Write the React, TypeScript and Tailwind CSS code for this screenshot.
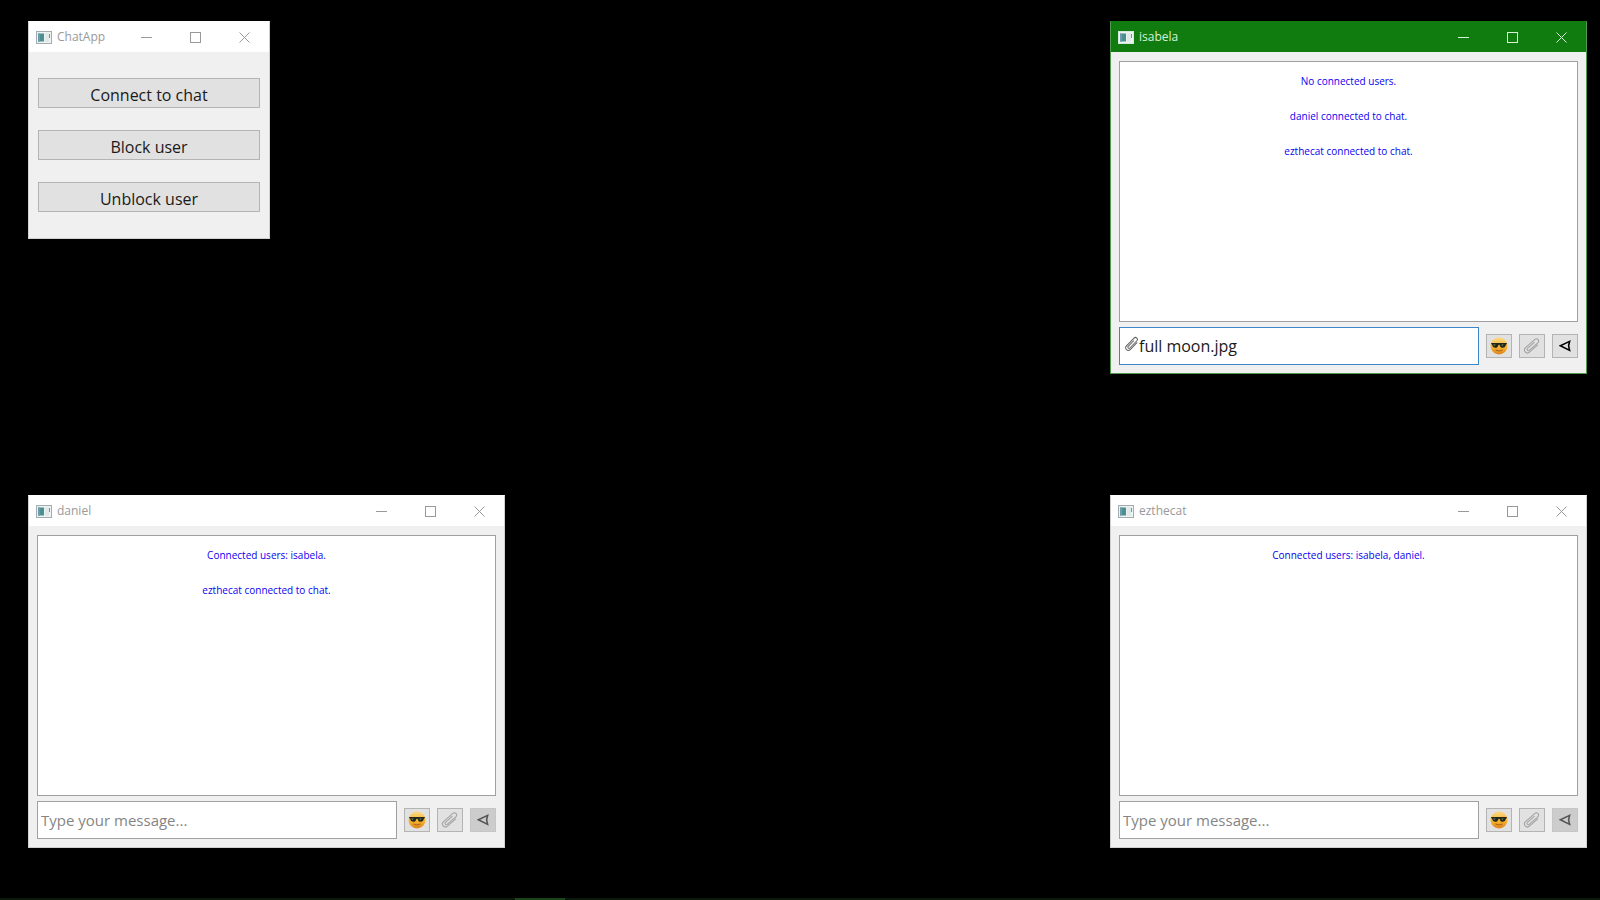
import { useState } from "react";

function AppIcon({ active }: { active?: boolean }) {
  return (
    <svg width="16" height="13" viewBox="0 0 16 13" aria-hidden="true" className="shrink-0">
      <rect x="0.5" y="0.5" width="15" height="12" fill="#eef3f2" stroke={active ? "#d5e6dc" : "#a3acb0"} />
      <rect x="2" y="2.5" width="6" height="8" fill="#4c8f8f" />
      <rect x="2" y="2.5" width="2" height="8" fill="#6d9ab0" />
      <rect x="9" y="2" width="4" height="9" fill="#dfe9ea" />
      <rect x="13" y="3" width="1" height="4" fill="#62a296" />
    </svg>
  );
}

function TitleBar({ title, active }: { title: string; active?: boolean }) {
  const control = "flex h-full w-[49px] items-center justify-center";
  return (
    <header
      className={
        active
          ? "flex h-[30px] items-center bg-[#107c10] pl-[7px] text-[#d9f0d9]"
          : "flex h-[30px] items-center bg-white pl-[7px] text-[#999999]"
      }
    >
      <AppIcon active={active} />
      <h1 className="ml-[5px] flex-1 text-[12px] leading-4">{title}</h1>
      <button type="button" aria-label="Minimize" className={control}>
        <svg width="11" height="11" viewBox="0 0 11 11" stroke="currentColor" fill="none">
          <path d="M0 5.5H11" />
        </svg>
      </button>
      <button type="button" aria-label="Maximize" className={control}>
        <svg width="11" height="11" viewBox="0 0 11 11" stroke="currentColor" fill="none">
          <rect x="0.5" y="0.5" width="10" height="10" />
        </svg>
      </button>
      <button type="button" aria-label="Close" className={control}>
        <svg width="11" height="11" viewBox="0 0 11 11" stroke="currentColor" fill="none">
          <path d="M0.5 0.5L10.5 10.5M10.5 0.5L0.5 10.5" />
        </svg>
      </button>
    </header>
  );
}

function SunglassesFace() {
  return (
    <svg width="18" height="18" viewBox="0 0 18 18" aria-hidden="true" className="shrink-0">
      <defs>
        <linearGradient id="face" x1="0" y1="0" x2="0" y2="1">
          <stop offset="0" stopColor="#fbd98a" />
          <stop offset="0.55" stopColor="#f7b52c" />
          <stop offset="1" stopColor="#dd8420" />
        </linearGradient>
      </defs>
      <circle cx="9" cy="9" r="8.5" fill="url(#face)" />
      <path d="M1.2 6H16.8V7.2L15.9 7.6C15.6 9.8 14.4 10.8 12.6 10.8C10.9 10.8 10 9.6 9.7 8.2C9.4 7.6 8.6 7.6 8.3 8.2C8 9.6 7.1 10.8 5.4 10.8C3.6 10.8 2.4 9.8 2.1 7.6L1.2 7.2Z" fill="#23261c" />
      <path d="M3.2 7.4L5.8 7.2L4.2 9.4ZM11.2 7.4L13.8 7.2L12.2 9.4Z" fill="#66704f" />
      <path d="M5.8 13.2Q9 15 12.2 13.2" fill="none" stroke="#a05a18" strokeWidth="0.9" strokeLinecap="round" />
    </svg>
  );
}

const clipPath = "M5 3H-6A3 3 0 0 1 -6 -3H6.5A2.2 2.2 0 0 1 6.5 1.4H-5A1.3 1.3 0 0 1 -5 -1.2H4";

function Paperclip() {
  return (
    <svg width="18" height="16" viewBox="-9 -8 18 16" fill="none" stroke="#a0a0a0" strokeLinecap="round" aria-hidden="true" className="shrink-0">
      <path d={clipPath} transform="rotate(-41)" />
    </svg>
  );
}

function AttachmentMark() {
  return (
    <svg
      width="14"
      height="16"
      viewBox="-8 -9 16 18"
      fill="none"
      stroke="#5e5e5e"
      strokeWidth="1.1"
      strokeLinecap="round"
      aria-hidden="true"
      className="mb-1 shrink-0"
    >
      <path d={clipPath} transform="rotate(-46)" />
    </svg>
  );
}

function ToolButton({ label, disabled, children }: { label: string; disabled?: boolean; children: React.ReactNode }) {
  return (
    <button
      type="button"
      aria-label={label}
      disabled={disabled}
      className={
        disabled
          ? "flex h-6 w-[26px] shrink-0 items-center justify-center border border-[#c6c6c6] bg-[#cccccc] text-[#555555]"
          : "flex h-6 w-[26px] shrink-0 items-center justify-center border border-[#b4b4b4] bg-[#e1e1e1] text-black"
      }
    >
      {children}
    </button>
  );
}

type ChatProps = { user: string; messages: string[]; attachment?: string; active?: boolean };

function ChatWindow({ user, messages, attachment, active }: ChatProps) {
  const [text, setText] = useState(attachment ?? "");
  return (
    <section
      aria-label={user}
      className={
        active
          ? "w-[477px] border border-[#4f9a4f] border-t-[#107c10] bg-[#f0f0f0]"
          : "w-[477px] border border-[#d0d0d0] border-t-white bg-[#f0f0f0]"
      }
    >
      <TitleBar title={user} active={active} />
      <div className="px-2 pt-[9px] pb-2">
        <div className="h-[261px] border border-[#a0a0a0] bg-white pt-[11px]">
          <ul className="flex flex-col gap-[19px] text-center font-['Open_Sans',sans-serif] text-[10px] leading-4 text-[#0a00f0]">
            {messages.map((message) => (
              <li key={message}>{message}</li>
            ))}
          </ul>
        </div>
        <form className="mt-[5px] flex items-center gap-[7px]" onSubmit={(event) => event.preventDefault()}>
          <label
            className={
              active
                ? "flex h-[38px] min-w-0 flex-1 items-center border border-[#3b87c8] bg-white pl-[5px]"
                : "flex h-[38px] min-w-0 flex-1 items-center border border-[#a0a0a0] bg-white pl-[3px]"
            }
          >
            {attachment && <AttachmentMark />}
            <input
              aria-label={`Message from ${user}`}
              placeholder="Type your message..."
              value={text}
              onChange={(event) => setText(event.target.value)}
              className="min-w-0 flex-1 bg-transparent text-[16px] leading-6 text-[#1a1a1a] outline-none placeholder:text-[15px] placeholder:text-[#858585]"
            />
          </label>
          <ToolButton label="Insert emoji">
            <SunglassesFace />
          </ToolButton>
          <ToolButton label="Attach file">
            <Paperclip />
          </ToolButton>
          <ToolButton label="Send" disabled={!text}>
            <svg width="12" height="12" viewBox="0 0 12 12" fill="none" stroke="currentColor" strokeWidth="1.6" aria-hidden="true">
              <path d="M10.6 1.4L1.4 5.8L10.6 10.4L9.6 5.8Z" />
            </svg>
          </ToolButton>
        </form>
      </div>
    </section>
  );
}

function LauncherWindow() {
  return (
    <section aria-label="ChatApp" className="w-[242px] border border-[#d0d0d0] border-t-white bg-[#f0f0f0]">
      <TitleBar title="ChatApp" />
      <div className="flex flex-col gap-[22px] px-[9px] pt-[26px] pb-[26px]">
        {["Connect to chat", "Block user", "Unblock user"].map((label) => (
          <button
            key={label}
            type="button"
            className="h-[30px] border border-[#b4b4b4] bg-[#e1e1e1] pt-[3px] text-[16px] leading-6 text-[#1a1a1a]"
          >
            {label}
          </button>
        ))}
      </div>
    </section>
  );
}

export default function App() {
  return (
    <main className="relative min-h-screen overflow-hidden bg-black font-['Open_Sans',sans-serif]">
      <div className="absolute top-[21px] left-7">
        <LauncherWindow />
      </div>
      <div className="absolute top-[21px] right-[13px]">
        <ChatWindow
          user="isabela"
          active
          attachment="full moon.jpg"
          messages={["No connected users.", "daniel connected to chat.", "ezthecat connected to chat."]}
        />
      </div>
      <div className="absolute top-[495px] left-7">
        <ChatWindow user="daniel" messages={["Connected users: isabela.", "ezthecat connected to chat."]} />
      </div>
      <div className="absolute top-[495px] right-[13px]">
        <ChatWindow user="ezthecat" messages={["Connected users: isabela, daniel."]} />
      </div>
      <div className="absolute inset-x-0 bottom-0 flex h-0.5 bg-[#0a1a0a] pl-[515px]">
        <div className="w-[50px] bg-[#1a451a]" />
      </div>
    </main>
  );
}
